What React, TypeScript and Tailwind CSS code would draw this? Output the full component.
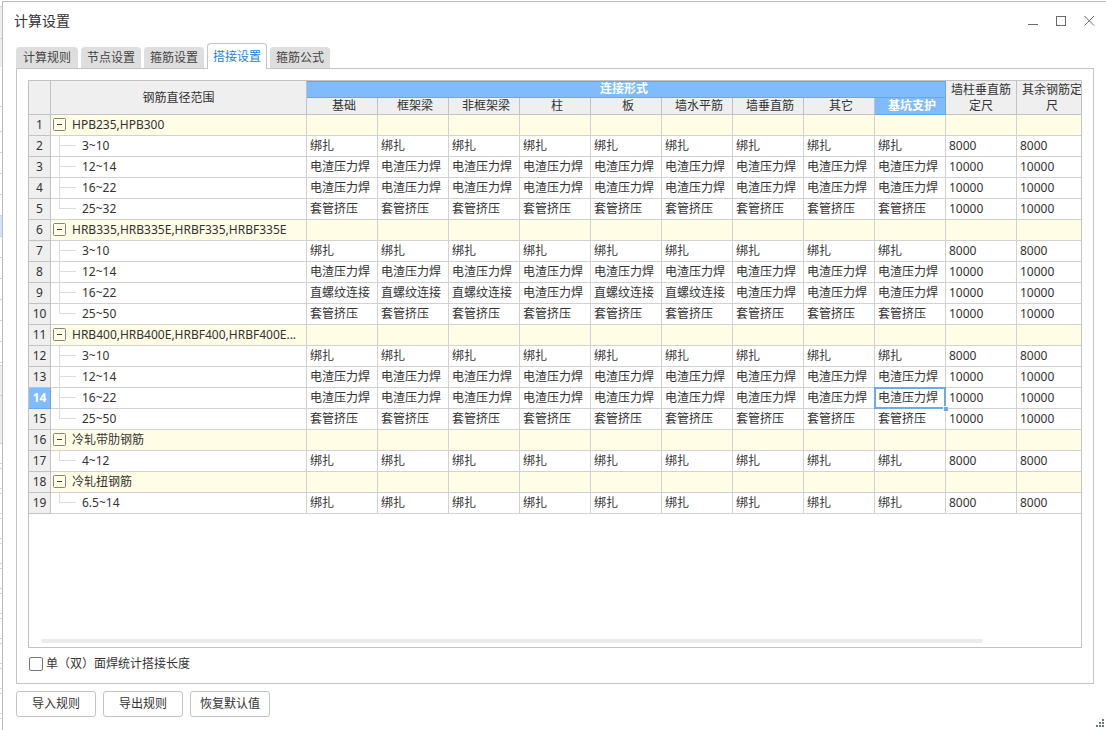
import React from "react";

type Group = {
  name: string;
  rows: { range: string; values: string[]; size: string }[];
};

const B = "绑扎";
const D = "电渣压力焊";
const T = "套管挤压";
const Z = "直螺纹连接";

const all = (value: string) => Array<string>(9).fill(value);

const columns = ["基础", "框架梁", "非框架梁", "柱", "板", "墙水平筋", "墙垂直筋", "其它", "基坑支护"];

const groups: Group[] = [
  {
    name: "HPB235,HPB300",
    rows: [
      { range: "3~10", values: all(B), size: "8000" },
      { range: "12~14", values: all(D), size: "10000" },
      { range: "16~22", values: all(D), size: "10000" },
      { range: "25~32", values: all(T), size: "10000" },
    ],
  },
  {
    name: "HRB335,HRB335E,HRBF335,HRBF335E",
    rows: [
      { range: "3~10", values: all(B), size: "8000" },
      { range: "12~14", values: all(D), size: "10000" },
      { range: "16~22", values: [Z, Z, Z, D, Z, Z, D, D, D], size: "10000" },
      { range: "25~50", values: all(T), size: "10000" },
    ],
  },
  {
    name: "HRB400,HRB400E,HRBF400,HRBF400E...",
    rows: [
      { range: "3~10", values: all(B), size: "8000" },
      { range: "12~14", values: all(D), size: "10000" },
      { range: "16~22", values: all(D), size: "10000" },
      { range: "25~50", values: all(T), size: "10000" },
    ],
  },
  { name: "冷轧带肋钢筋", rows: [{ range: "4~12", values: all(B), size: "8000" }] },
  { name: "冷轧扭钢筋", rows: [{ range: "6.5~14", values: all(B), size: "8000" }] },
];

const tabs = ["计算规则", "节点设置", "箍筋设置", "搭接设置", "箍筋公式"];

const SELECTED_ROW = 14;
const SELECTED_COLUMN = 8;

const headCell = "border-r border-b border-[#c3c3c3] bg-[#efefef] p-0 font-normal";
const activeCell = "border-r border-b border-[#68a8e8] bg-[#80bbfb] p-0 font-bold text-white";
const bodyCell = "h-[21px] border-r border-b border-[#d2d2d2] p-0";

// sliver of the main window that stays visible behind the dialog
const WindowBehind: React.FC = () => (
  <div className="flex w-[2px] shrink-0 flex-col overflow-hidden" aria-hidden="true">
    <div className="mt-[5px] h-[33px] shrink-0 border-y border-[#d2d2d2] bg-[#efefef]" />
    <div className="h-7 shrink-0 bg-[#efefef]" />
    <div className="h-10 shrink-0 border-b border-[#d2d2d2]" />
    <div className="h-[25px] shrink-0 border-b border-[#d2d2d2]" />
    {Array.from({ length: 11 }, (_, i) => (
      <div
        key={i}
        className={`h-[21px] shrink-0 border-b border-[#d2d2d2] ${i === 4 ? "bg-[#cfe4fb]" : ""}`}
      />
    ))}
    <div className="mt-[2px] h-[31px] shrink-0 border-y border-[#d2d2d2] bg-[#efefef]" />
    <div className="h-12 shrink-0 border-b border-[#d2d2d2] bg-[#efefef]" />
    {Array.from({ length: 12 }, (_, i) => (
      <div key={i} className="mt-[19px] h-[6px] shrink-0 border-y border-[#d8d8d8]" />
    ))}
  </div>
);

const TitleBar: React.FC = () => (
  <header className="flex h-[37px] items-center justify-between px-[11px]">
    <h1 className="text-sm">计算设置</h1>
    <div className="flex gap-[17px] text-[#6b6b6b]">
      <button type="button" aria-label="最小化">
        <svg width="11" height="11" viewBox="0 0 11 11" shapeRendering="crispEdges">
          <path d="M0 9.5h10" stroke="currentColor" />
        </svg>
      </button>
      <button type="button" aria-label="最大化">
        <svg width="11" height="11" viewBox="0 0 11 11" shapeRendering="crispEdges">
          <path d="M.5 1.5h9v9h-9z" fill="none" stroke="currentColor" />
        </svg>
      </button>
      <button type="button" aria-label="关闭">
        <svg width="11" height="11" viewBox="0 0 11 11">
          <path d="M.5 1 10 10.5M10 1 .5 10.5" stroke="currentColor" />
        </svg>
      </button>
    </div>
  </header>
);

const RowNumber: React.FC<{ value: number }> = ({ value }) => (
  <th className={value === SELECTED_ROW ? activeCell : headCell}>{value}</th>
);

const Branch: React.FC<{ last: boolean }> = ({ last }) => (
  <svg width="17" height="21" className="shrink-0" shapeRendering="crispEdges">
    <path d={last ? "M.5 0v10M0 9.5h17" : "M.5 0v21M0 9.5h17"} stroke="#dcdcdc" />
  </svg>
);

const GroupRows: React.FC<{ group: Group; start: number }> = ({ group, start }) => (
  <>
    <tr className="bg-[#fffde6]">
      <RowNumber value={start} />
      <td className={bodyCell}>
        <div className="flex h-5 items-center gap-[6px] pl-[2px]">
          <button type="button" aria-label="折叠" className="-mt-px">
            <svg width="13" height="13" viewBox="0 0 13 13">
              <rect x=".5" y=".5" width="12" height="12" rx="1" fill="none" stroke="#858585" />
              <path d="M4 6.5h5" stroke="#444" />
            </svg>
          </button>
          <span className="whitespace-nowrap">{group.name}</span>
        </div>
      </td>
      {Array.from({ length: 11 }, (_, i) => (
        <td key={i} className={bodyCell} />
      ))}
    </tr>
    {group.rows.map((row, r) => {
      const number = start + r + 1;
      return (
        <tr key={number}>
          <RowNumber value={number} />
          <td className={bodyCell}>
            <div className="flex h-5 items-center gap-[6px] pl-2">
              <Branch last={r === group.rows.length - 1} />
              <span>{row.range}</span>
            </div>
          </td>
          {row.values.map((value, c) => (
            <td key={c} className={`${bodyCell} relative whitespace-nowrap pl-[3px]`}>
              {value}
              {number === SELECTED_ROW && c === SELECTED_COLUMN && (
                <>
                  <span className="absolute -inset-px z-10 border-2 border-[#6eaae6]" />
                  <span className="absolute -right-[3px] -bottom-[3px] z-10 size-[5px] border-t border-l border-white bg-[#6eaae6]" />
                </>
              )}
            </td>
          ))}
          <td className={`${bodyCell} pl-[3px]`}>{row.size}</td>
          <td className={`${bodyCell} pl-[3px]`}>{row.size}</td>
        </tr>
      );
    })}
  </>
);

const SettingsTable: React.FC = () => {
  let next = 1;
  return (
    <table className="w-[1059px] table-fixed border-separate border-spacing-0">
      <colgroup>
        <col className="w-[22px]" />
        <col className="w-[256px]" />
        <col span={11} className="w-[71px]" />
      </colgroup>
      <thead className="leading-4">
        <tr className="h-[17px]">
          <th rowSpan={2} className={headCell} />
          <th rowSpan={2} className={headCell}>
            钢筋直径范围
          </th>
          <th colSpan={9} className={`${activeCell} pr-1 shadow-[inset_0_1px_#68a8e8]`}>
            连接形式
          </th>
          <th rowSpan={2} className={headCell}>
            墙柱垂直筋定尺
          </th>
          <th rowSpan={2} className={headCell}>
            其余钢筋定尺
          </th>
        </tr>
        <tr className="h-[17px]">
          {columns.map((column, c) => (
            <th key={column} className={`${c === SELECTED_COLUMN ? activeCell : headCell} pl-1`}>
              {column}
            </th>
          ))}
        </tr>
      </thead>
      <tbody className="leading-5">
        {groups.map((group) => {
          const start = next;
          next += group.rows.length + 1;
          return <GroupRows key={group.name} group={group} start={start} />;
        })}
      </tbody>
    </table>
  );
};

const App: React.FC = () => {
  return (
    <div className="flex h-screen overflow-hidden bg-white pt-px font-['Noto_Sans','Noto_Sans_CJK_SC',sans-serif] text-xs text-[#333]">
      <WindowBehind />
      <div className="relative flex min-w-0 flex-1 flex-col border-t border-l border-[#bcbcbc]">
        <TitleBar />
        <nav className="z-10 -mb-px flex items-end gap-[3px] px-[13px] pt-1">
          {tabs.map((tab) => (
            <button
              key={tab}
              type="button"
              className={
                tab === "搭接设置"
                  ? "h-[26px] w-[60px] rounded-t border border-b-0 border-[#c3c5cc] bg-white text-[#2a7de1]"
                  : "mb-px h-[21px] w-[60px] rounded-t bg-[#dedede] text-[#444] first:w-[62px]"
              }
            >
              {tab}
            </button>
          ))}
        </nav>
        <main className="mr-3 ml-[13px] flex min-h-0 flex-1 flex-col border border-[#c3c5cc] px-[11px] pt-[11px]">
          <section className="flex min-h-0 flex-1 flex-col overflow-hidden border border-[#c3c3c3]">
            <div className="min-h-0 flex-1 overflow-hidden">
              <SettingsTable />
            </div>
            <div className="mr-[98px] mb-1 ml-3 h-1 rounded-full bg-[#ebebeb]" />
          </section>
          <label className="flex h-[35px] items-center gap-[3px] pb-1 pl-px">
            <input
              type="checkbox"
              className="size-[14px] appearance-none rounded-xs border border-[#777] bg-white"
            />
            <span>
              单<span className="font-['Noto_Sans_CJK_TC',sans-serif]">（</span>双
              <span className="font-['Noto_Sans_CJK_TC',sans-serif]">）</span>面焊统计搭接长度
            </span>
          </label>
        </main>
        <footer className="flex gap-[7px] px-[13px] pt-[7px] pb-[13px]">
          {["导入规则", "导出规则", "恢复默认值"].map((label) => (
            <button
              key={label}
              type="button"
              className="h-[26px] w-20 rounded-[3px] border border-[#c3c3c3] bg-white"
            >
              {label}
            </button>
          ))}
        </footer>
        <svg
          width="8"
          height="8"
          className="absolute right-[2px] bottom-[3px]"
          fill="#6f7480"
          shapeRendering="crispEdges"
        >
          <path d="M6 0h2v2H6zM3 3h2v2H3zM6 3h2v2H6zM0 6h2v2H0zM3 6h2v2H3zM6 6h2v2H6z" />
        </svg>
      </div>
    </div>
  );
};

export default App;
